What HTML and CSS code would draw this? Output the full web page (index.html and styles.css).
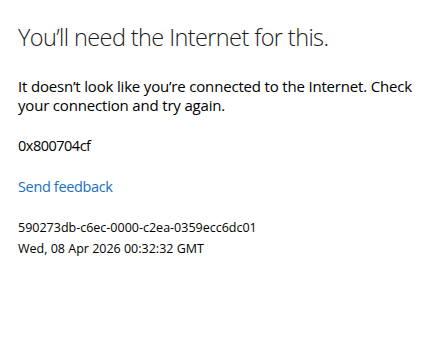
FILE: index.html
```html
<!DOCTYPE html>
<html lang="en">
<head>
<meta charset="utf-8">
<link rel="stylesheet" href="styles.css">
</head>
<body>
<main class="page">
  <h1 class="title">You’ll need the Internet for this.</h1>
  <p class="message">It doesn’t look like you’re connected to the Internet. Check your connection and try again.</p>
  <p class="code">0x800704cf</p>
  <a class="feedback" href="#">Send feedback</a>
  <div class="meta">
    <div>590273db-c6ec-0000-c2ea-0359ecc6dc01</div>
    <div>Wed, 08 Apr 2026 00:32:32 GMT</div>
  </div>
</main>
</body>
</html>
```
FILE: styles.css
```css
html, body {
  margin: 0;
  padding: 0;
  background: #ffffff;
}
.page {
  padding: 21px 18px 0 18px;
  font-family: "Open Sans", "Noto Sans", sans-serif;
  color: #000000;
  display: flex;
  flex-direction: column;
  align-items: flex-start;
}
.title {
  margin: 0;
  font-size: 23.5px;
  font-weight: 300;
  line-height: 32px;
  letter-spacing: -0.6px;
  color: #1a1a1a;
}
.message {
  margin: 24px 0 0 0;
  font-size: 15px;
  line-height: 19px;
  letter-spacing: -0.18px;
}
.code {
  margin: 21px 0 0 0;
  font-size: 14.5px;
  line-height: 20px;
  letter-spacing: -0.5px;
}
.feedback {
  margin-top: 21px;
  font-size: 14.5px;
  line-height: 20px;
  letter-spacing: -0.35px;
  color: #1a6fc2;
  text-decoration: none;
}
.meta {
  margin-top: 21px;
  font-size: 12.5px;
  line-height: 20.5px;
}
```
